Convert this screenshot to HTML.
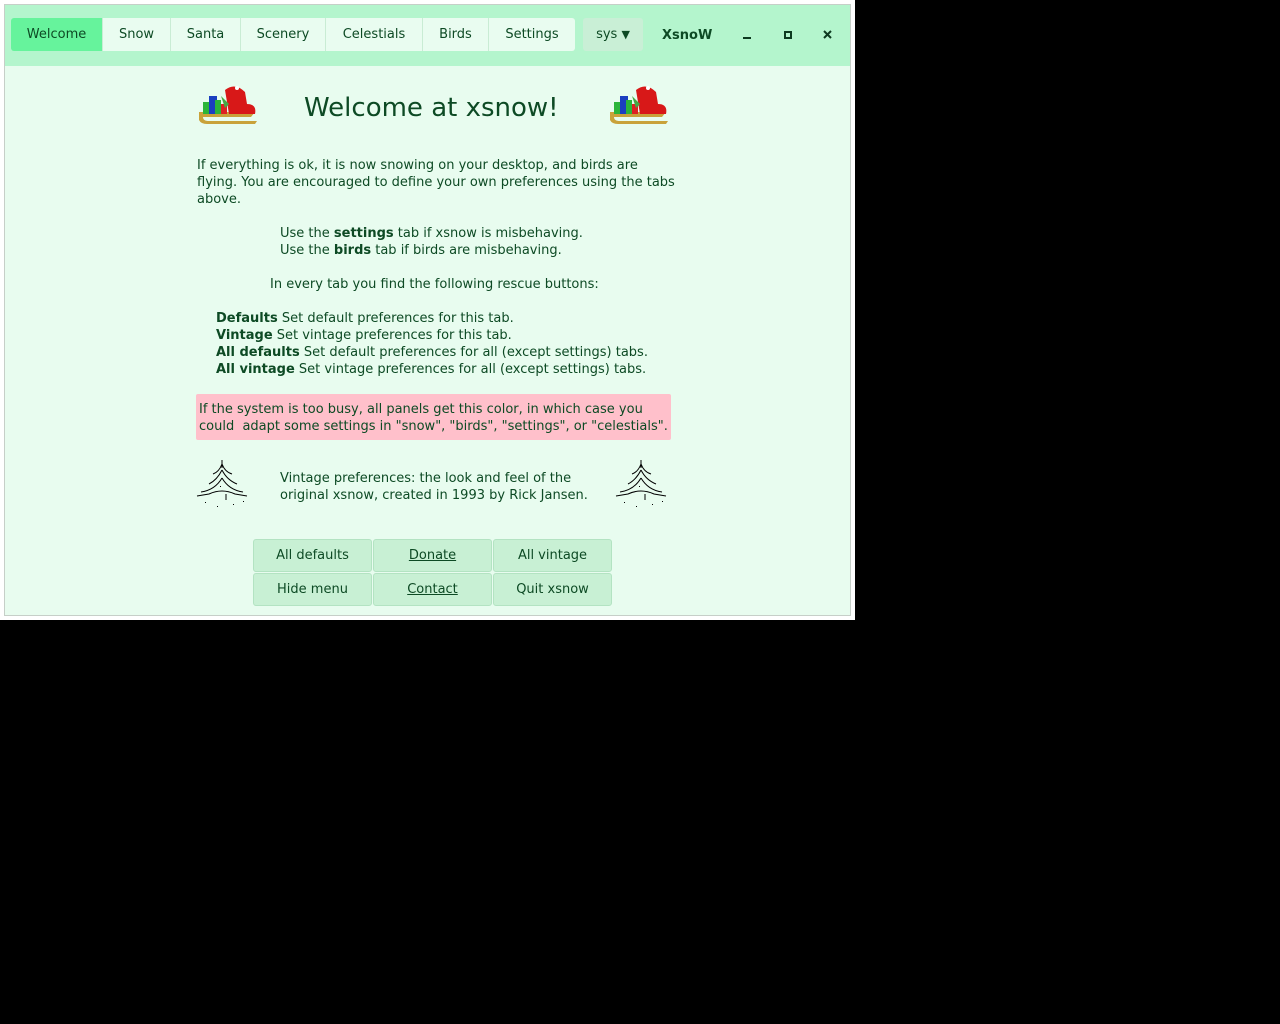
<!DOCTYPE html>
<html><head><meta charset="utf-8"><style>
*{margin:0;padding:0;box-sizing:border-box}
body{width:1280px;height:1024px;background:#000;position:relative;overflow:hidden;font-family:"DejaVu Sans","Liberation Sans",sans-serif;font-size:13px;color:#0d4a24}
.abs{position:absolute}
#frame{left:0;top:0;width:855px;height:620px;background:#fff}
#win{left:4px;top:4px;width:847px;height:612px;background:#e8fcef;border:1px solid #c6cfc8}
#hdr{left:5px;top:5px;width:845px;height:61px;background:#b4f5cd}
.tab{position:absolute;top:18px;height:33px;line-height:34px;text-align:center;background:#e9fcf0;border-right:1px solid #c9ecd4;color:#0d4a24}
.t{position:absolute;white-space:nowrap;line-height:17px}
.btn{position:absolute;width:119px;height:33px;line-height:32px;text-align:center;background:#c8f0d4;border:1px solid #b3e3c2;border-radius:3px}
u{text-decoration:underline}
</style></head><body>
<div class="abs" id="frame"></div>
<div class="abs" id="win"></div>
<div class="abs" id="hdr"></div>
<div class="tab" style="left:11px;width:92px;background:#66f39c;border-radius:3px 0 0 3px">Welcome</div>
<div class="tab" style="left:103px;width:68px">Snow</div>
<div class="tab" style="left:171px;width:70px">Santa</div>
<div class="tab" style="left:241px;width:85px">Scenery</div>
<div class="tab" style="left:326px;width:97px">Celestials</div>
<div class="tab" style="left:423px;width:66px">Birds</div>
<div class="tab" style="left:489px;width:86px;border-right:none;border-radius:0 3px 3px 0">Settings</div>
<div class="tab" style="left:583px;width:60px;background:#c9efd6;border-radius:3px;border:none">sys <span style="font-size:11px">&#9660;</span></div>
<div class="t" style="left:662px;top:27px;font-weight:bold">XsnoW</div>
<div class="abs" style="left:743px;top:37px;width:8px;height:2px;background:#0d3a20"></div>
<div class="abs" style="left:784px;top:31px;width:8px;height:8px;border:2px solid #0d3a20"></div>
<svg class="abs" style="left:823px;top:30px" width="9" height="9" viewBox="0 0 9 9"><path d="M1 1L8 8M8 1L1 8" stroke="#0d3a20" stroke-width="2"/></svg>

<svg class="abs" style="left:195px;top:84px" width="66" height="42" viewBox="0 0 66 42">
<path d="M4 28 L4 36 Q6 40 12 40 L60 40 L62 37 L14 37 Q8 37 8 33 L56 33 L60 28 Z" fill="#c9a23a"/>
<rect x="8" y="18" width="8" height="12" fill="#2bb53a"/><rect x="14" y="12" width="8" height="18" fill="#1b3fc0"/><rect x="20" y="16" width="6" height="14" fill="#2bb53a"/><rect x="26" y="20" width="6" height="10" fill="#d22"/>
<path d="M30 6 Q40 -2 50 8 L52 20 Q62 20 60 30 L34 30 Z" fill="#d81818"/><circle cx="42" cy="4" r="2" fill="#fff"/><path d="M26 12 L34 20 L30 24 Z" fill="#4a4"/>
</svg>
<svg class="abs" style="left:606px;top:84px" width="66" height="42" viewBox="0 0 66 42">
<path d="M4 28 L4 36 Q6 40 12 40 L60 40 L62 37 L14 37 Q8 37 8 33 L56 33 L60 28 Z" fill="#c9a23a"/>
<rect x="8" y="18" width="8" height="12" fill="#2bb53a"/><rect x="14" y="12" width="8" height="18" fill="#1b3fc0"/><rect x="20" y="16" width="6" height="14" fill="#2bb53a"/><rect x="26" y="20" width="6" height="10" fill="#d22"/>
<path d="M30 6 Q40 -2 50 8 L52 20 Q62 20 60 30 L34 30 Z" fill="#d81818"/><circle cx="42" cy="4" r="2" fill="#fff"/><path d="M26 12 L34 20 L30 24 Z" fill="#4a4"/>
</svg>
<div class="t" style="left:304px;top:91px;font-size:26px;line-height:34px">Welcome at xsnow!</div>

<div class="t" style="left:197px;top:157px">If everything is ok, it is now snowing on your desktop, and birds are</div>
<div class="t" style="left:197px;top:174px">flying. You are encouraged to define your own preferences using the tabs</div>
<div class="t" style="left:197px;top:191px">above.</div>
<div class="t" style="left:280px;top:225px">Use the <b>settings</b> tab if xsnow is misbehaving.</div>
<div class="t" style="left:280px;top:242px">Use the <b>birds</b> tab if birds are misbehaving.</div>
<div class="t" style="left:270px;top:276px">In every tab you find the following rescue buttons:</div>
<div class="t" style="left:216px;top:310px"><b>Defaults</b> Set default preferences for this tab.</div>
<div class="t" style="left:216px;top:327px"><b>Vintage</b> Set vintage preferences for this tab.</div>
<div class="t" style="left:216px;top:344px"><b>All defaults</b> Set default preferences for all (except settings) tabs.</div>
<div class="t" style="left:216px;top:361px"><b>All vintage</b> Set vintage preferences for all (except settings) tabs.</div>
<div class="abs" style="left:196px;top:394px;width:475px;height:46px;background:#ffc0cb;border-radius:2px"></div>
<div class="t" style="left:199px;top:401px">If the system is too busy, all panels get this color, in which case you</div>
<div class="t" style="left:199px;top:418px">could&nbsp; adapt some settings in "snow", "birds", "settings", or "celestials".</div>

<svg class="abs" style="left:195px;top:458px" width="55" height="56" viewBox="0 0 55 56" fill="none" stroke="#000" stroke-width="1">
<path d="M27 2 V10 M27 6 Q24 14 18 16 M27 6 Q30 14 37 16 M27 12 Q22 22 14 26 M27 12 Q32 22 42 26 M27 20 Q20 32 6 34 M27 20 Q34 32 48 34 M2 38 L14 36 Q27 30 40 36 L52 38 M31 36 V42"/>
<g fill="#000" stroke="none"><rect x="10" y="44" width="1" height="1"/><rect x="22" y="48" width="1" height="1"/><rect x="38" y="46" width="1" height="1"/><rect x="48" y="43" width="1" height="1"/><rect x="25" y="28" width="1" height="1"/></g>
</svg>
<svg class="abs" style="left:614px;top:458px" width="55" height="56" viewBox="0 0 55 56" fill="none" stroke="#000" stroke-width="1">
<path d="M27 2 V10 M27 6 Q24 14 18 16 M27 6 Q30 14 37 16 M27 12 Q22 22 14 26 M27 12 Q32 22 42 26 M27 20 Q20 32 6 34 M27 20 Q34 32 48 34 M2 38 L14 36 Q27 30 40 36 L52 38 M31 36 V42"/>
<g fill="#000" stroke="none"><rect x="10" y="44" width="1" height="1"/><rect x="22" y="48" width="1" height="1"/><rect x="38" y="46" width="1" height="1"/><rect x="48" y="43" width="1" height="1"/><rect x="25" y="28" width="1" height="1"/></g>
</svg>
<div class="t" style="left:280px;top:470px">Vintage preferences: the look and feel of the</div>
<div class="t" style="left:280px;top:487px">original xsnow, created in 1993 by Rick Jansen.</div>

<div class="btn" style="left:253px;top:539px">All defaults</div>
<div class="btn" style="left:373px;top:539px"><u>Donate</u></div>
<div class="btn" style="left:493px;top:539px">All vintage</div>
<div class="btn" style="left:253px;top:573px">Hide menu</div>
<div class="btn" style="left:373px;top:573px"><u>Contact</u></div>
<div class="btn" style="left:493px;top:573px">Quit xsnow</div>
</body></html>
